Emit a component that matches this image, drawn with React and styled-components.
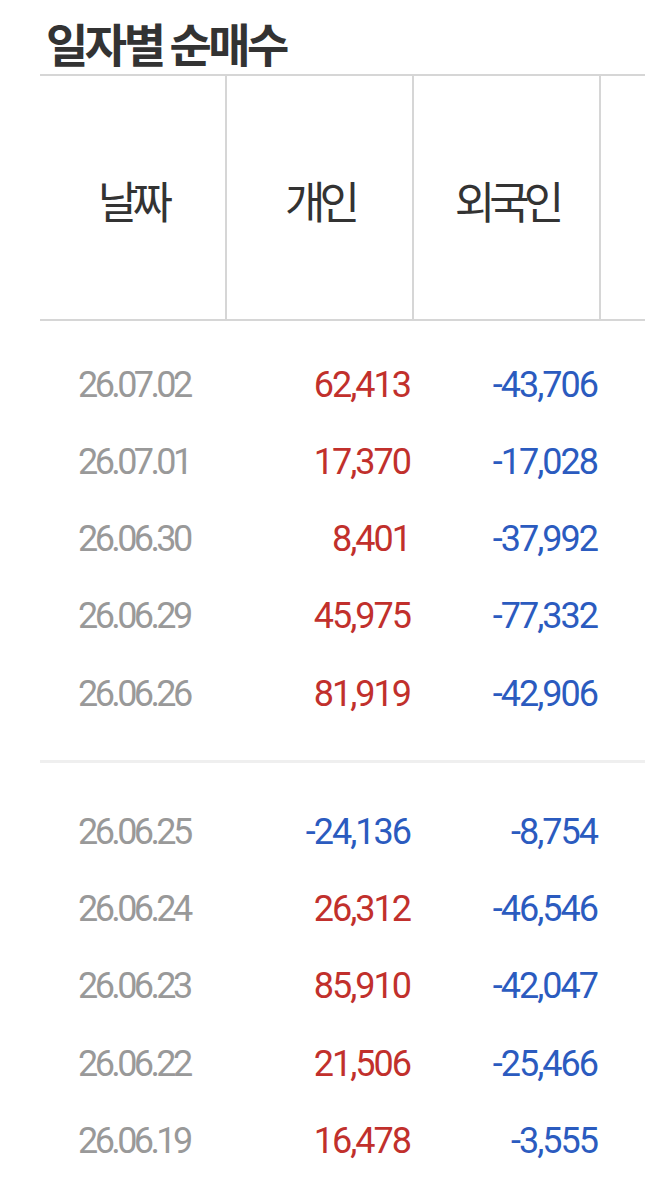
import React from "react";
import styled, { createGlobalStyle } from "styled-components";

const GlobalStyle = createGlobalStyle`
  body {
    margin: 0;
    background: #fff;
    font-family: "Noto Sans CJK KR", "Noto Sans", sans-serif;
  }
`;

const Page = styled.div`
  width: 645px;
  height: 1183px;
  overflow: hidden;
  background: #fff;
`;

const Title = styled.h2`
  margin: 0;
  padding: 18px 0 0 46px;
  height: 74px;
  box-sizing: border-box;
  font-size: 46px;
  line-height: 48px;
  font-weight: 700;
  color: #333;
  letter-spacing: -3.5px;
  white-space: nowrap;
`;

const TableWrap = styled.div`
  margin-left: 40px;
  width: 605px;
  overflow: hidden;
`;

const HeadRow = styled.div`
  display: grid;
  grid-template-columns: repeat(4, 187px);
  width: 748px;
  height: 247px;
  box-sizing: border-box;
  border-top: 2px solid #d6d6d6;
  border-bottom: 2px solid #d6d6d6;
`;

const HeadCell = styled.div`
  display: flex;
  align-items: center;
  justify-content: center;
  padding-top: 4px;
  box-sizing: border-box;
  border-right: 2px solid #d6d6d6;
  font-size: 44px;
  font-weight: 400;
  color: #333;
  letter-spacing: -6px;
  white-space: nowrap;
`;

const Group = styled.div`
  padding: ${(p) => p.$top}px 0 ${(p) => p.$bottom}px;
  border-top: ${(p) => (p.$divided ? "3px solid #efefef" : "none")};
`;

const Row = styled.div`
  display: grid;
  grid-template-columns: 187px 187px 187px;
  height: 77.25px;
  align-items: center;
`;

const DateCell = styled.div`
  padding-left: 38px;
  font-family: Roboto, "Liberation Sans", sans-serif;
  font-size: 36px;
  color: #999;
  letter-spacing: -3.6px;
`;

const NumCell = styled.div`
  text-align: right;
  padding-right: ${(p) => p.$pad}px;
  font-family: Roboto, "Liberation Sans", sans-serif;
  font-size: 36px;
  letter-spacing: -2px;
  color: ${(p) => (p.$neg ? "#2b5bbf" : "#c1302c")};
`;

const groups = [
  [
    ["26.07.02", 62413, -43706],
    ["26.07.01", 17370, -17028],
    ["26.06.30", 8401, -37992],
    ["26.06.29", 45975, -77332],
    ["26.06.26", 81919, -42906],
  ],
  [
    ["26.06.25", -24136, -8754],
    ["26.06.24", 26312, -46546],
    ["26.06.23", 85910, -42047],
    ["26.06.22", 21506, -25466],
    ["26.06.19", 16478, -3555],
  ],
];

const fmt = (n) => n.toLocaleString("en-US");

export default function App() {
  return (
    <Page>
      <GlobalStyle />
      <Title>일자별 순매수</Title>
      <TableWrap>
        <HeadRow>
          <HeadCell>날짜</HeadCell>
          <HeadCell>개인</HeadCell>
          <HeadCell>외국인</HeadCell>
          <HeadCell>기관</HeadCell>
        </HeadRow>
        {groups.map((rows, gi) => (
          <Group key={gi} $top={gi === 0 ? 25 : 30} $bottom={gi === 0 ? 28 : 0} $divided={gi > 0}>
            {rows.map((r) => (
              <Row key={r[0]}>
                <DateCell>{r[0]}</DateCell>
                <NumCell $neg={r[1] < 0} $pad={4}>{fmt(r[1])}</NumCell>
                <NumCell $neg={r[2] < 0} $pad={4}>{fmt(r[2])}</NumCell>
              </Row>
            ))}
          </Group>
        ))}
      </TableWrap>
    </Page>
  );
}
